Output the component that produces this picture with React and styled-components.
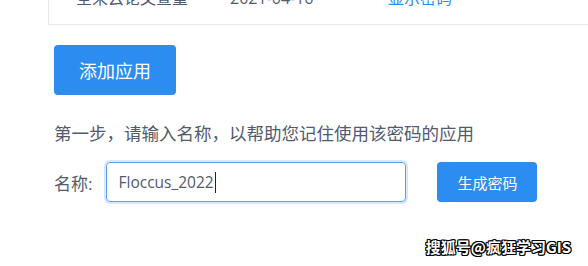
import React from 'react';
import styled, { createGlobalStyle } from 'styled-components';

const GlobalStyle = createGlobalStyle`
    html, body {
        margin: 0;
        padding: 0;
        background: #ffffff;
        overflow: hidden;
    }
    body {
        font-family: 'Open Sans', 'Noto Sans CJK SC', sans-serif;
        color: #515a6e;
    }
`;

const Page = styled.div`
    position: relative;
    width: 588px;
    height: 266px;
    overflow: hidden;
    padding-left: 48px;
    box-sizing: border-box;
`;

const Table = styled.div`
    margin-top: -22px;
    width: 620px;
    border-left: 1px solid #e8eaec;
    border-bottom: 1px solid #e8eaec;
`;

const Row = styled.div`
    display: flex;
    padding: 8px 0 14px 27px;
    line-height: 24px;
    font-size: 16px;
    color: #515a6e;
`;

const Cell = styled.div`
    width: ${props => props.width}px;
    color: ${props => (props.link ? '#2d8cf0' : 'inherit')};
`;

const Content = styled.div`
    padding-left: 6px;
    display: flex;
    flex-direction: column;
    align-items: flex-start;
`;

const PrimaryButton = styled.button`
    background: #2d8cf0;
    color: #ffffff;
    border: none;
    border-radius: 4px;
    font-family: 'Noto Sans CJK SC', sans-serif;
    font-size: ${props => (props.large ? '18px' : '15px')};
    width: ${props => (props.large ? '122px' : '100px')};
    height: ${props => (props.large ? '50px' : '40px')};
    padding: 0;
    cursor: pointer;
`;

const AddButton = styled(PrimaryButton)`
    margin-top: 20px;
`;

const StepText = styled.p`
    margin: 23px 0 0;
    font-family: 'Noto Sans CJK SC', sans-serif;
    font-size: 17.5px;
    line-height: 30px;
    color: #515a6e;
`;

const FormRow = styled.div`
    margin-top: 14px;
    display: flex;
    align-items: center;
`;

const Label = styled.span`
    font-family: 'Open Sans', 'Noto Sans CJK SC', sans-serif;
    font-size: 17px;
    color: #515a6e;
    margin-right: 14px;
`;

const Field = styled.div`
    width: 300px;
    height: 40px;
    box-sizing: border-box;
    border: 1px solid #57a3f3;
    border-radius: 4px;
    box-shadow: 0 0 0 2px rgba(45, 140, 240, 0.2);
    display: flex;
    align-items: center;
    padding-left: 11px;
    margin-right: 31px;
    font-family: 'Open Sans', sans-serif;
    font-size: 15.5px;
    color: #515a6e;
`;

const Caret = styled.span`
    display: inline-block;
    width: 1px;
    height: 21px;
    background: #222;
    margin-left: 1px;
`;

const Watermark = styled.div`
    position: absolute;
    right: 17px;
    bottom: 9px;
    font-family: 'Noto Sans CJK SC', sans-serif;
    font-weight: 700;
    font-size: 15px;
    color: #ffffff;
    text-shadow:
        1px 1px 0 #000, -1px -1px 0 #000, 1px -1px 0 #000, -1px 1px 0 #000,
        0 1px 0 #000, 0 -1px 0 #000, 1px 0 0 #000, -1px 0 0 #000;
`;

export default function App() {
    return (
        <Page>
            <GlobalStyle />
            <Table>
                <Row>
                    <Cell width={154}>全来云论文查重</Cell>
                    <Cell width={158}>2021-04-16</Cell>
                    <Cell width={100} link>
                        显示密码
                    </Cell>
                </Row>
            </Table>
            <Content>
                <AddButton large>添加应用</AddButton>
                <StepText>第一步，请输入名称，以帮助您记住使用该密码的应用</StepText>
                <FormRow>
                    <Label>名称:</Label>
                    <Field>
                        Floccus_2022
                        <Caret />
                    </Field>
                    <PrimaryButton>生成密码</PrimaryButton>
                </FormRow>
            </Content>
            <Watermark>搜狐号@疯狂学习GIS</Watermark>
        </Page>
    );
}
